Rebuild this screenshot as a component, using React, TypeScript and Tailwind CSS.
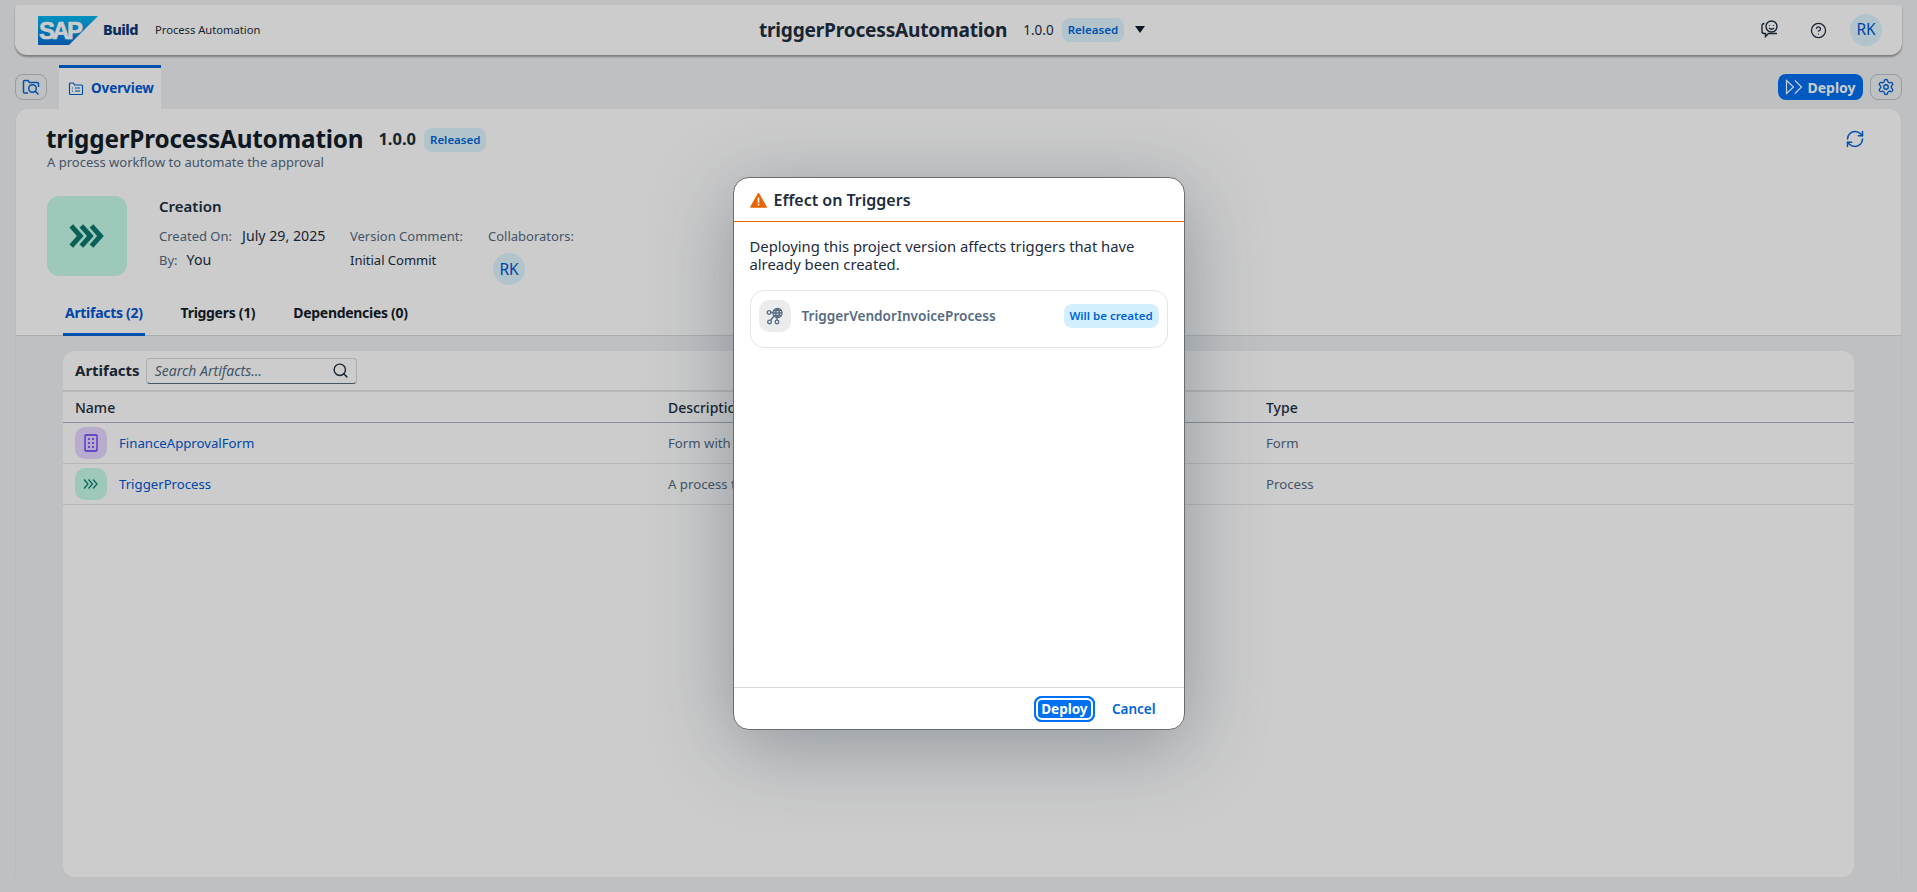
import { CircleHelp, RefreshCw, Search, Settings } from "lucide-react";

const FONT = "font-['Noto_Sans','Open_Sans',sans-serif]";

function SapLogo() {
  return (
    <svg width="60" height="29" viewBox="0 0 60 29" className="shrink-0">
      <defs>
        <linearGradient id="sap" x1="0.5" y1="0" x2="0.5" y2="1">
          <stop offset="0" stopColor="#00b8f1" />
          <stop offset="1" stopColor="#0a6ed1" />
        </linearGradient>
      </defs>
      <polygon points="0,0 60,0 31,29 0,29" fill="url(#sap)" />
      <text x="1" y="23" fill="#fff" stroke="#fff" strokeWidth="0.6" fontFamily="Liberation Sans" fontWeight="700" fontSize="24" textLength="44">
        SAP
      </text>
    </svg>
  );
}

function TripleChevron({ size, stroke, width }: { size: number; stroke: string; width: number }) {
  return (
    <svg width={size} height={size} viewBox="0 0 32 32" fill="none" stroke={stroke} strokeWidth={width}>
      <path d="M2 7l8 9-8 9M11 7l8 9-8 9M20 7l8 9-8 9" />
    </svg>
  );
}

function OverviewIcon() {
  return (
    <svg width="16" height="16" viewBox="0 0 16 16" fill="none" stroke="#0064d9" strokeWidth="1.2">
      <path d="M1.500 4V3a1 1 0 0 1 1-1h3l1 2h7a1 1 0 0 1 1 1v7.500a1 1 0 0 1-1 1h-11a1 1 0 0 1-1-1z" />
      <path d="M4 7h1M7 7h5M4 10h1M7 10h5" />
    </svg>
  );
}

function ExplorerIcon() {
  return (
    <svg width="18" height="18" viewBox="0 0 18 18" fill="none" stroke="#0064d9" strokeWidth="1.5">
      <path d="M6 15H2.500a1 1 0 0 1-1-1V3.500a1 1 0 0 1 1-1h3.500l1.500 2h8a1 1 0 0 1 1 1V9" />
      <circle cx="10.500" cy="10.500" r="3.800" />
      <path d="M13.300 13.300L16.500 16.500" />
    </svg>
  );
}

function FeedbackIcon() {
  return (
    <svg width="20" height="20" viewBox="0 0 20 20" fill="none" stroke="#1d2d3e" strokeWidth="1.4">
      <circle cx="11.500" cy="6.500" r="5.500" />
      <path d="M9.500 5.300v.6M13.500 5.300v.6M9 8c1.400 1.300 3.600 1.300 5 0" />
      <path d="M4.500 3.500C2.500 3.500 2 4.500 2 6v5.500c0 1.500.8 2 2 2h1.500v3l3-3H17" />
    </svg>
  );
}

function DeployIcon() {
  return (
    <svg width="18" height="18" viewBox="0 0 18 18" fill="none" stroke="#fff" strokeWidth="1.2">
      <path d="M1.500 2.500v13L8.500 9zM10 2.500L16.500 9 10 15.500" />
    </svg>
  );
}

function WarningIcon() {
  return (
    <svg width="17" height="16" viewBox="0 0 17 16">
      <path d="M8.500 1L16.500 15.200H.5z" fill="#e76500" stroke="#e76500" strokeWidth="1" strokeLinejoin="round" />
      <path d="M7.700 5.500h1.600v5.200H7.700zM7.700 11.800h1.600v1.600H7.700z" fill="#fff" />
    </svg>
  );
}

function TriggerIcon() {
  return (
    <svg width="18" height="18" viewBox="0 0 18 18" fill="none" stroke="#556b82" strokeWidth="1.3">
      <circle cx="11.500" cy="6" r="4.500" />
      <path d="M7 6h9M7.800 3.500h7.400M7.800 8.500h7.400M11.500 1.500c-2.400 2.800-2.400 6.200 0 9M11.500 1.500c2.400 2.800 2.400 6.200 0 9" />
      <circle cx="3" cy="5.500" r="1.800" />
      <circle cx="3.500" cy="15" r="1.800" />
      <circle cx="11" cy="15" r="1.800" />
      <path d="M4.800 5.500H7M4.500 13.500L8 9M11 10.500v2.700" />
    </svg>
  );
}

function FormIcon() {
  return (
    <svg width="16" height="18" viewBox="0 0 16 18" fill="none" stroke="#5d36ff" strokeWidth="1.3">
      <rect x="2" y="1" width="12" height="16" rx="1" />
      <path d="M5 5h2M9 5h2M5 9h2M9 9h2M5 13h2M9 13h2" />
    </svg>
  );
}

function Artifact({ name, desc, type, tile, icon }: { name: string; desc: string; type: string; tile: string; icon: React.ReactNode }) {
  return (
    <div className="grid h-[41px] grid-cols-[593px_598px_1fr] items-center border-b border-[#e5e5e5] pl-3 text-[13.2px]">
      <div className="flex items-center gap-3">
        <span className={`flex h-8 w-8 items-center justify-center rounded-[10px] ${tile}`}>{icon}</span>
        <a className="mt-[2px] text-[#0057d2]">{name}</a>
      </div>
      <span className="mt-[2px] text-[#556b82]">{desc}</span>
      <span className="mt-[2px] text-[#556b82]">{type}</span>
    </div>
  );
}

function Tab({ label, active }: { label: string; active?: boolean }) {
  return (
    <div
      className={`flex h-[43px] items-center border-b-[3px] px-[2px] pb-[2px] text-[14px] font-bold tracking-[-0.3px] ${
        active ? "border-[#0064d9] text-[#0057d2]" : "border-transparent text-[#131e29]"
      }`}
    >
      {label}
    </div>
  );
}

export default function App() {
  return (
    <div className={`relative h-[892px] w-full overflow-hidden bg-[#eff1f3] text-[#1d2d3e] ${FONT}`}>
      {/* Shell bar */}
      <header className="mx-[15px] mt-[5px] flex h-[50px] items-center rounded-b-xl rounded-t-[4px] bg-white pl-[23px] pr-[20px] shadow-[0_2px_2px_rgba(0,0,0,0.35)]">
        <div className="flex flex-1 items-center">
          <SapLogo />
          <span className="ml-[5px] text-[14.500px] font-extrabold tracking-[-0.5px] text-[#0a3a78]">Build</span>
          <span className="ml-[17px] mt-[1px] text-[11.200px]">Process Automation</span>
        </div>
        <div className="mr-[16px] flex items-center">
          <span className="text-[19.100px] font-bold tracking-[-0.2px]">triggerProcessAutomation</span>
          <span className="ml-[16px] text-[13.500px]">1.0.0</span>
          <span className="ml-2 rounded-lg bg-[#def5ff] px-[6px] py-[3px] text-[11.500px] font-semibold leading-[18px] text-[#0064d9]">Released</span>
          <span className="ml-[11px] h-0 w-0 border-x-[5px] border-t-[7px] border-x-transparent border-t-[#131e29]" />
        </div>
        <div className="flex flex-1 items-center justify-end">
          <FeedbackIcon />
          <CircleHelp size={17} strokeWidth={1.8} className="ml-[30px]" />
          <span className="ml-[23px] flex h-8 w-8 items-center justify-center rounded-full bg-[#def5ff] text-[15.500px] text-[#0057d2]">RK</span>
        </div>
      </header>

      {/* Tab strip */}
      <div className="mx-[15px] mt-[10px] flex h-[44px] items-center">
        <button className="flex h-[26px] w-8 items-center justify-center rounded-lg border border-[#bcc3ca]">
          <ExplorerIcon />
        </button>
        <div className="ml-[12px] flex h-[44px] items-center gap-[7px] self-start border-t-[3px] border-[#0064d9] bg-white pl-[9px] pr-[7px] text-[13.500px] font-bold tracking-[-0.1px] text-[#0057d2]">
          <OverviewIcon />
          Overview
        </div>
        <div className="ml-auto flex items-center gap-[7px]">
          <button className="flex h-[26px] w-[85px] items-center justify-center gap-1 rounded-lg bg-[#0070f2] text-[14px] font-bold text-white">
            <DeployIcon />
            Deploy
          </button>
          <button className="flex h-[26px] w-8 items-center justify-center rounded-lg border border-[#bcc3ca] text-[#0064d9]">
            <Settings size={18} strokeWidth={1.8} />
          </button>
        </div>
      </div>

      {/* Project panel */}
      <section className="mx-[15px] rounded-t-xl border-x border-[#e7e9eb]">
        <div className="relative h-[227px] rounded-t-xl border-b border-[#d5dadd] bg-white px-[31px] pt-[16px]">
          <div className="flex h-[29px] items-center">
            <h1 className="-ml-[1px] text-[24.300px] font-bold tracking-[-0.2px] text-[#131e29]">triggerProcessAutomation</h1>
            <span className="ml-[15px] text-[16.500px] font-bold">1.0.0</span>
            <span className="ml-2 rounded-lg bg-[#def5ff] px-[6px] py-[3px] text-[11.500px] font-semibold leading-[18px] text-[#0064d9]">Released</span>
          </div>
          <p className="text-[13px] leading-[16px] text-[#556b82]">A process workflow to automate the approval</p>
          <RefreshCw size={20} strokeWidth={1.8} className="absolute right-[36px] top-[20px] text-[#0064d9]" />
          <div className="mt-[26px] flex">
            <div className="flex h-[80px] w-[80px] items-center justify-center rounded-xl bg-[#c5fbe9]">
              <TripleChevron size={36} stroke="#0a7a6e" width={4.4} />
            </div>
            <div className="ml-[32px]">
              <div className="text-[15px] font-semibold leading-[20px]">Creation</div>
              <div className="mt-[8px] flex text-[13px] leading-[24px]">
                <div className="w-[191px]">
                  <div><span className="mr-[10px] text-[#556b82]">Created On:</span><span className="text-[14.200px]">July 29, 2025</span></div>
                  <div><span className="mr-[9px] text-[#556b82]">By:</span><span className="text-[14.200px]">You</span></div>
                </div>
                <div className="w-[138px]">
                  <div className="text-[#556b82]">Version Comment:</div>
                  <div>Initial Commit</div>
                </div>
                <div>
                  <div className="text-[#556b82]">Collaborators:</div>
                  <span className="ml-[5px] mt-[5px] flex h-8 w-8 items-center justify-center rounded-full bg-[#def5ff] text-[15.500px] text-[#0057d2]">RK</span>
                </div>
              </div>
            </div>
          </div>
          <nav className="absolute bottom-[-1px] left-[47px] flex gap-[34px]">
            <Tab label="Artifacts (2)" active />
            <Tab label="Triggers (1)" />
            <Tab label="Dependencies (0)" />
          </nav>
        </div>

        {/* Artifacts table */}
        <div className="mx-[47px] mt-[15px] h-[526px] rounded-xl bg-white">
          <div className="flex h-[41px] items-center border-b-2 border-[#e5e5e5] pl-3">
            <span className="text-[15px] font-bold">Artifacts</span>
            <div className="ml-[6px] flex h-[26px] w-[211px] items-center justify-between rounded-[4px] border border-[#d5dadd] border-b-[#556b82] pl-2 pr-[7px]">
              <span className="text-[14px] italic text-[#556b82]">Search Artifacts...</span>
              <Search size={17} strokeWidth={2} />
            </div>
          </div>
          <div className="grid h-[31px] grid-cols-[593px_598px_1fr] items-center border-b border-[#a9b4be] pl-3 text-[14px] font-medium">
            <span>Name</span>
            <span>Description</span>
            <span>Type</span>
          </div>
          <Artifact name="FinanceApprovalForm" desc="Form with the approval" type="Form" tile="bg-[#e6d8ff]" icon={<FormIcon />} />
          <Artifact name="TriggerProcess" desc="A process to trigger" type="Process" tile="bg-[#c5fbe9]" icon={<TripleChevron size={16} stroke="#0a7a6e" width={2.4} />} />
        </div>
      </section>

      {/* Dim layer + dialog */}
      <div className="absolute inset-0 flex justify-center bg-black/20 pt-[177px]">
        <div className="flex h-[553px] w-[452px] flex-col rounded-2xl border border-[#6a6d70] bg-white shadow-[0_16px_80px_rgba(34,54,73,0.35)]">
          <div className="flex h-[44px] items-center gap-[7px] border-b border-[#e76500] px-[16px] text-[16px] font-semibold text-[#1d2d3e]">
            <WarningIcon />
            Effect on Triggers
          </div>
          <div className="flex-1 px-4 pt-[15px]">
            <p className="text-[14.800px] leading-[18px] text-[#1d2d3e]">
              Deploying this project version affects triggers that have already been created.
            </p>
            <div className="mt-[17px] flex h-[58px] items-center rounded-[14px] border border-[#e5e5e5] pb-[6px] pl-2 pr-2">
              <span className="flex h-8 w-8 items-center justify-center rounded-[10px] bg-[#eaecee]">
                <TriggerIcon />
              </span>
              <span className="ml-[11px] text-[13.600px] font-semibold text-[#556b82]">TriggerVendorInvoiceProcess</span>
              <span className="ml-auto flex h-6 w-[95px] items-center justify-center rounded-lg bg-[#d1efff] text-[11.500px] font-semibold text-[#0064d9]">Will be created</span>
            </div>
          </div>
          <div className="flex h-[42px] items-center justify-end gap-[17px] border-t border-[#d9d9d9] pr-[28px] pt-[1px] text-[13.500px] font-semibold">
            <button className="flex h-[26px] w-[61px] items-center justify-center rounded-lg bg-[#0070f2] font-bold text-white outline-2 outline-offset-[-4px] outline-white ring-2 ring-inset ring-[#0070f2]">
              Deploy
            </button>
            <button className="text-[#0064d9]">Cancel</button>
          </div>
        </div>
      </div>
    </div>
  );
}
